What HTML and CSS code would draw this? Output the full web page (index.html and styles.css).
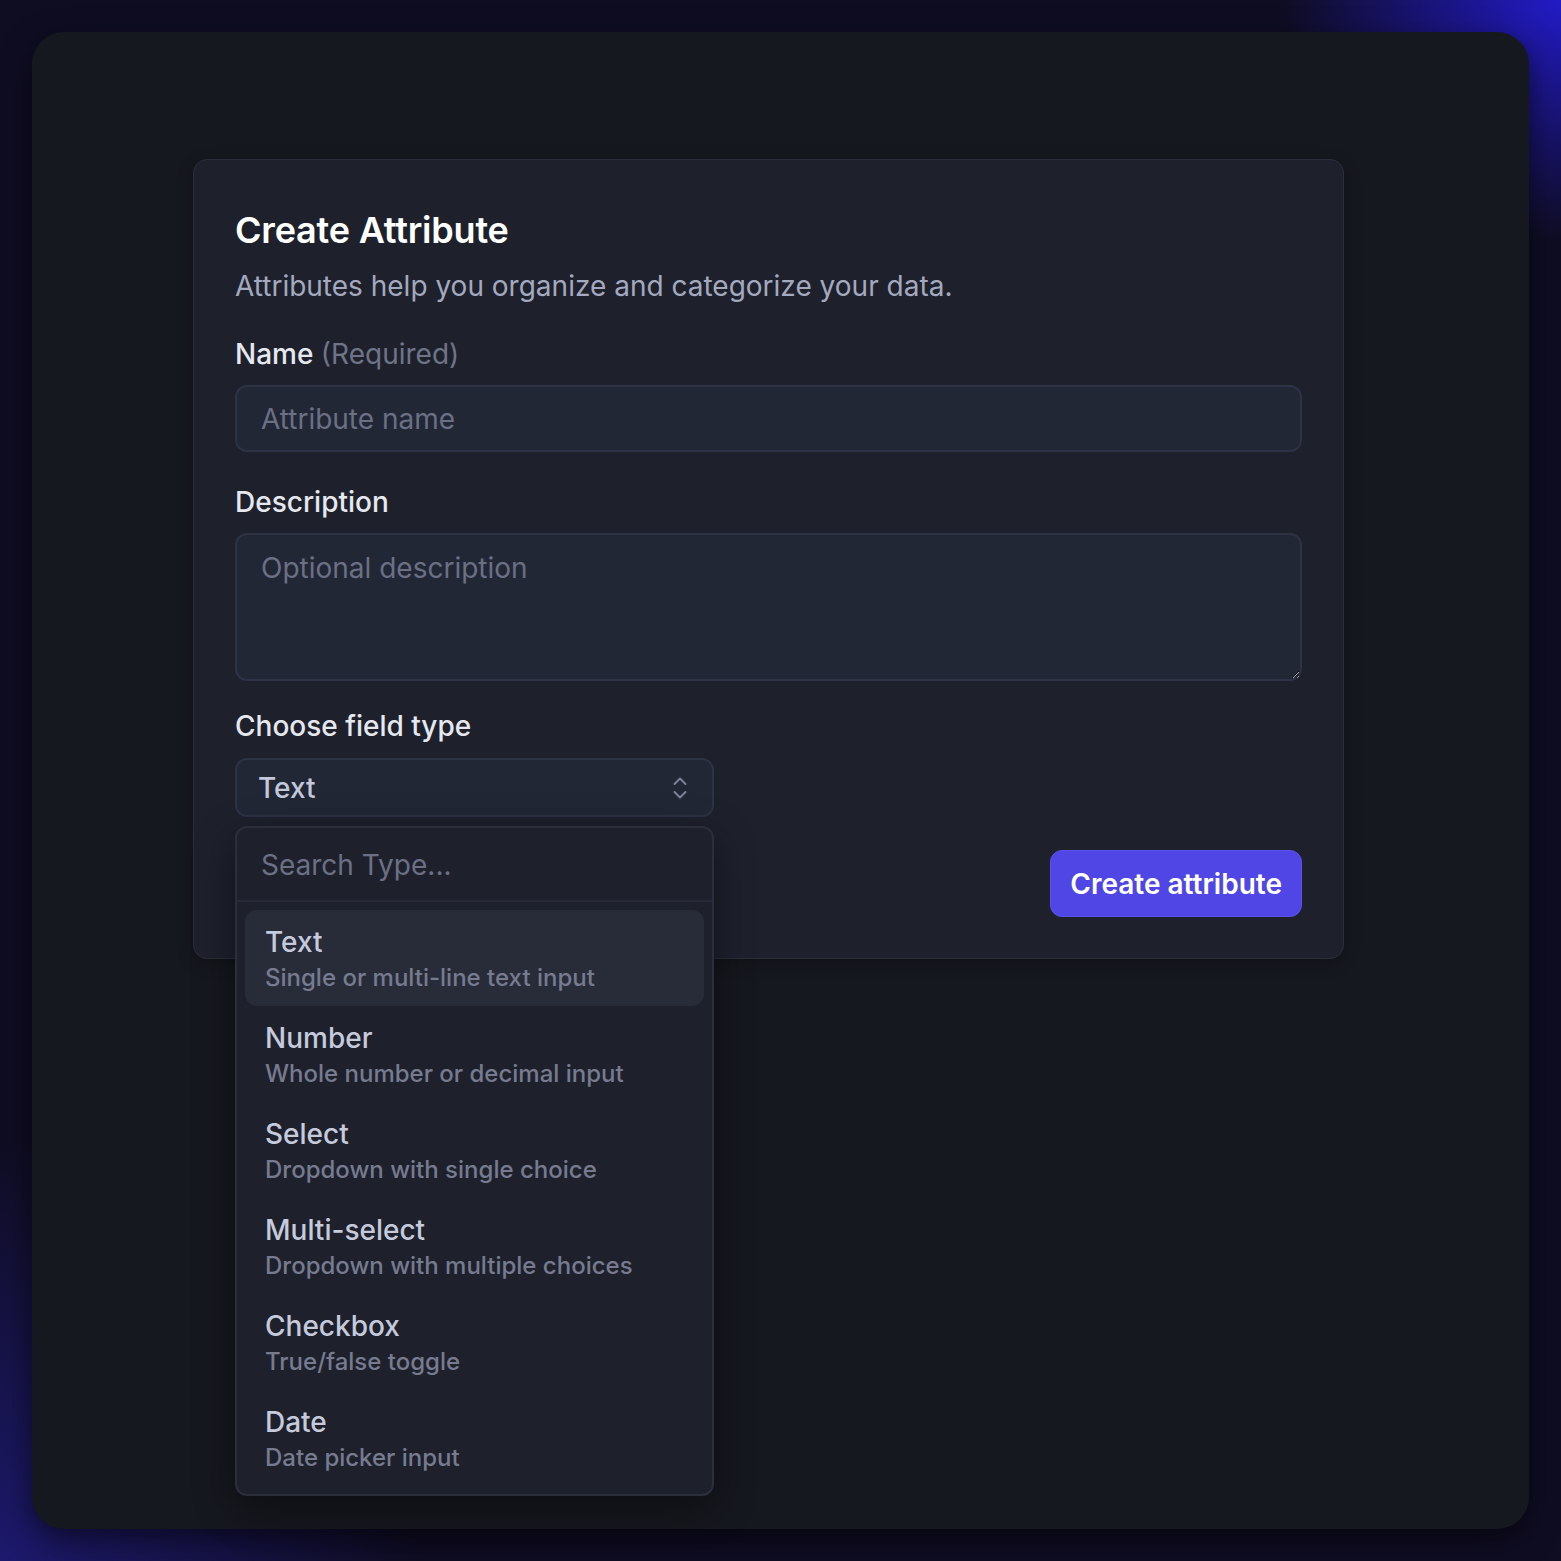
FILE: index.html
```html
<!DOCTYPE html>
<html lang="en">
<head>
<meta charset="utf-8">
<title>Create Attribute</title>
<link rel="stylesheet" href="styles.css">
</head>
<body>
<div class="stage">
  <div class="frame">
    <section class="card">
      <h1 class="title">Create Attribute</h1>
      <p class="subtitle">Attributes help you organize and categorize your data.</p>

      <label class="label" for="name">Name <span class="muted">(Required)</span></label>
      <input id="name" class="field" type="text" placeholder="Attribute name">

      <label class="label label-gap" for="desc">Description</label>
      <textarea id="desc" class="field area" placeholder="Optional description"></textarea>

      <div class="label label-gap2">Choose field type</div>
      <div class="select-wrap">
        <div class="select">
          <span class="select-value">Text</span>
          <svg class="chev" width="16" height="26" viewBox="0 0 16 26" fill="none" stroke="currentColor" stroke-width="2" stroke-linecap="round" stroke-linejoin="round"><path d="M2.5 9 8 3.5 13.5 9"/><path d="M2.5 17 8 22.5 13.5 17"/></svg>
        </div>
        <div class="menu">
          <div class="menu-search">Search Type...</div>
          <ul class="menu-list">
            <li class="opt active"><div class="opt-title">Text</div><div class="opt-desc">Single or multi-line text input</div></li>
            <li class="opt"><div class="opt-title">Number</div><div class="opt-desc">Whole number or decimal input</div></li>
            <li class="opt"><div class="opt-title">Select</div><div class="opt-desc">Dropdown with single choice</div></li>
            <li class="opt"><div class="opt-title">Multi-select</div><div class="opt-desc">Dropdown with multiple choices</div></li>
            <li class="opt"><div class="opt-title">Checkbox</div><div class="opt-desc">True/false toggle</div></li>
            <li class="opt"><div class="opt-title">Date</div><div class="opt-desc">Date picker input</div></li>
          </ul>
        </div>
      </div>

      <div class="actions">
        <button class="btn" type="button">Create attribute</button>
      </div>
    </section>
  </div>
</div>
</body>
</html>
```
FILE: styles.css
```css
* { box-sizing: border-box; }
html, body { margin: 0; padding: 0; }
body {
  width: 1561px;
  height: 1561px;
  overflow: hidden;
  font-family: Inter, "Noto Sans", sans-serif;
  background: #0f0d22;
}
.stage {
  width: 1561px;
  height: 1561px;
  padding: 32px;
  background:
    radial-gradient(ellipse 280px 240px at 100% 0%, rgba(36, 28, 215, 0.9), rgba(36, 28, 215, 0) 100%),
    radial-gradient(ellipse 420px 420px at 0% 100%, rgba(40, 35, 170, 0.55), rgba(40, 35, 170, 0) 100%),
    #0f0d22;
}
.frame {
  width: 1497px;
  height: 1497px;
  border-radius: 32px;
  background: #16181f;
  box-shadow: 0 10px 30px rgba(0,0,0,0.55);
  padding: 127px 0 0 161px;
}
.card {
  position: relative;
  width: 1151px;
  background: #1e212c;
  border: 1px solid #2b2f3c;
  border-radius: 14px;
  padding: 48px 41px 41px 41px;
  display: flex;
  flex-direction: column;
  box-shadow: 0 4px 16px rgba(0,0,0,0.25);
}
.title {
  margin: 0;
  font-size: 36px;
  line-height: 44px;
  font-weight: 600;
  color: #ffffff;
  letter-spacing: -0.2px;
}
.subtitle {
  margin: 16px 0 0;
  font-size: 28px;
  line-height: 36px;
  color: #a3a9bf;
}
.label {
  display: block;
  margin-top: 32px;
  font-size: 28px;
  line-height: 36px;
  font-weight: 500;
  color: #e6e8f0;
}
.label-gap { margin-top: 32px; }
.label-gap2 { margin-top: 27px; }
.muted { color: #6f7489; font-weight: 400; }
.field {
  display: block;
  width: 100%;
  margin-top: 13px;
  height: 67px;
  background: #222736;
  border: 2px solid #2d3244;
  border-radius: 12px;
  padding: 0 24px;
  font-family: inherit;
  font-size: 28px;
  color: #e6e8f0;
  outline: none;
}
.field::placeholder { color: #6b7084; }
.area {
  height: 148px;
  padding: 15px 24px;
  line-height: 36px;
  resize: vertical;
  color-scheme: dark;
}
.select-wrap {
  position: relative;
  width: 479px;
  margin-top: 14px;
}
.select {
  height: 59px;
  background: #222736;
  border: 2px solid #2d3244;
  border-radius: 12px;
  display: flex;
  align-items: center;
  justify-content: space-between;
  padding: 0 24px 0 21px;
}
.select-value {
  font-size: 28px;
  font-weight: 500;
  color: #c3c8da;
}
.chev { color: #7d8297; display: block; }
.menu {
  position: absolute;
  top: 68px;
  left: 0;
  width: 479px;
  background: #1e212c;
  border: 2px solid #2b2f3c;
  border-radius: 12px;
  box-shadow: 0 12px 40px rgba(0,0,0,0.45);
  z-index: 5;
}
.menu-search {
  height: 74px;
  border-bottom: 2px solid #272b38;
  display: flex;
  align-items: center;
  padding: 2px 24px 0;
  font-size: 28px;
  color: #6b7084;
}
.menu-list {
  list-style: none;
  margin: 0;
  padding: 8px;
}
.opt {
  height: 96px;
  border-radius: 12px;
  padding: 15px 20px 0;
}
.opt.active { background: #282c39; }
.opt-title {
  font-size: 28px;
  line-height: 34px;
  font-weight: 500;
  color: #c5cadc;
}
.opt-desc {
  margin-top: 3px;
  font-size: 24px;
  line-height: 32px;
  font-weight: 500;
  color: #767b90;
}
.actions {
  display: flex;
  justify-content: flex-end;
  margin-top: 33px;
}
.btn {
  height: 67px;
  padding: 0 19px;
  border: 1px solid #5a52ec;
  border-radius: 12px;
  background: #4f46e5;
  color: #ffffff;
  font-family: inherit;
  font-size: 28px;
  font-weight: 600;
}
```
